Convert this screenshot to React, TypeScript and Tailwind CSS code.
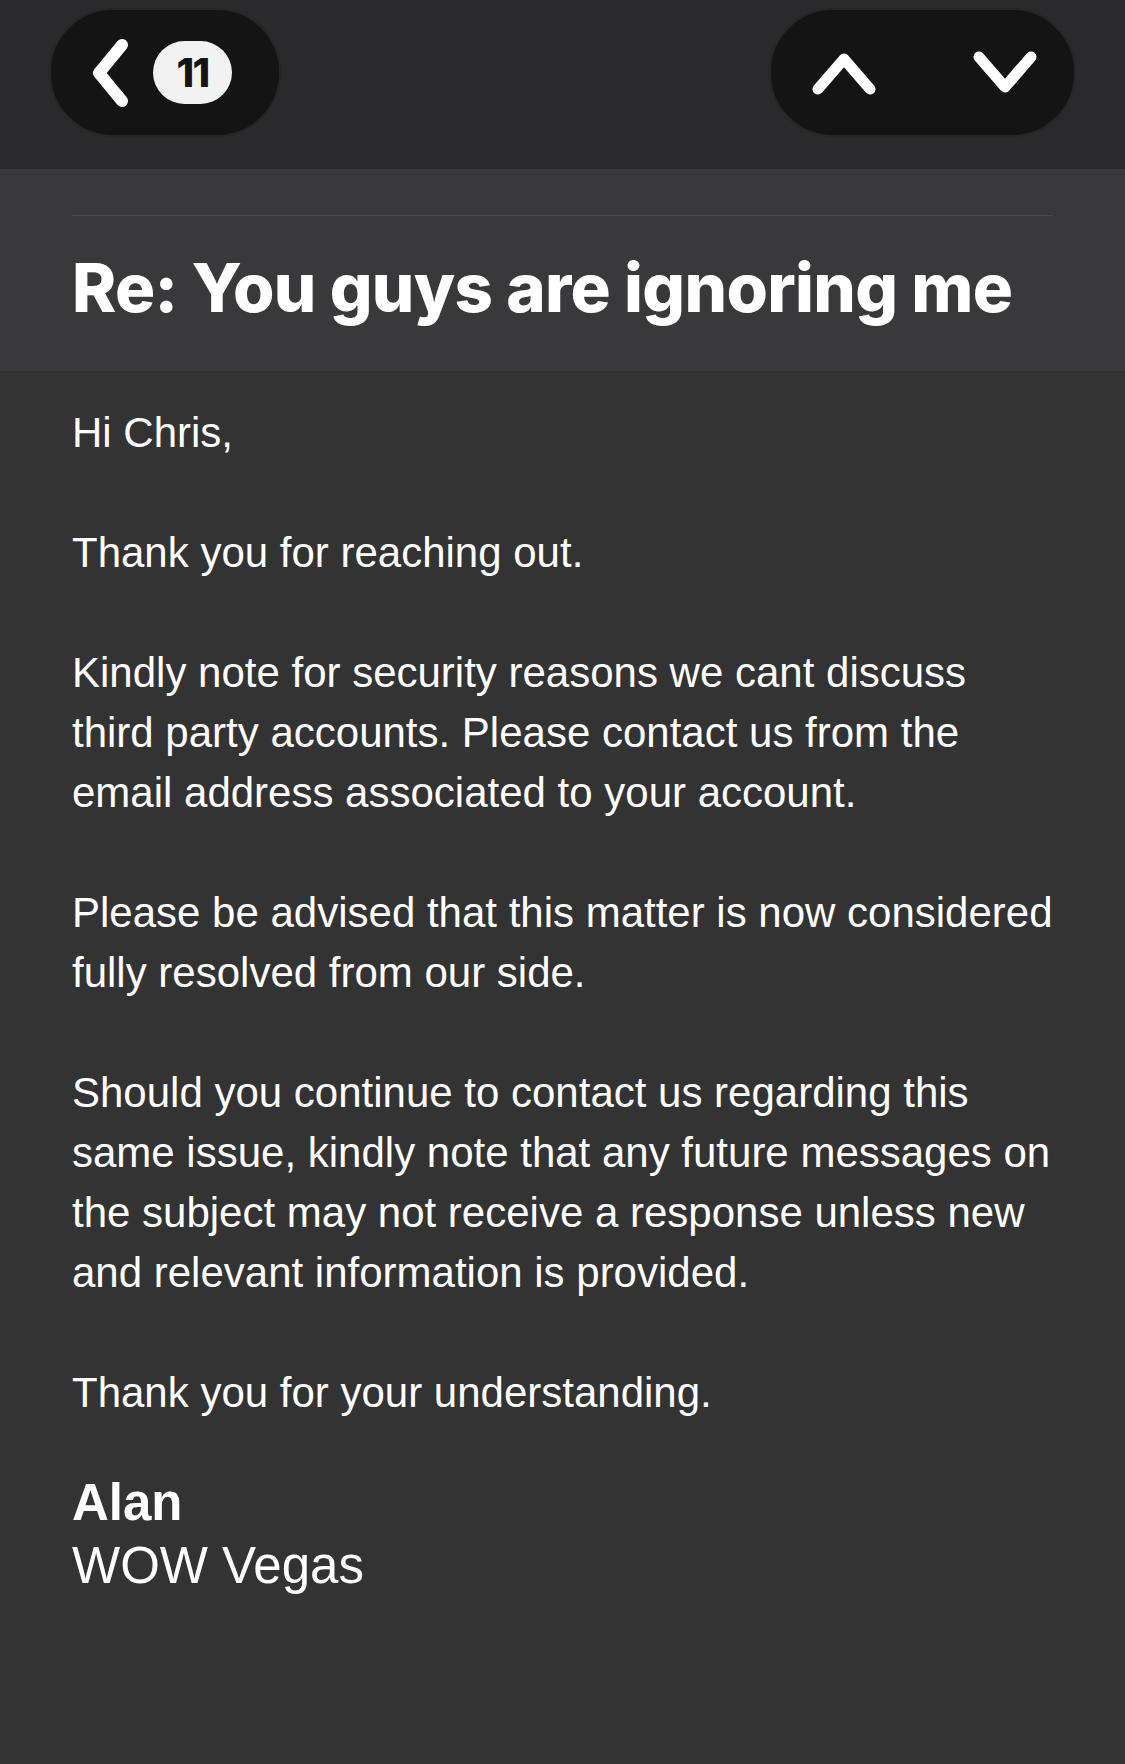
import React from "react";

function ChevronLeft() {
  return (
    <svg width="44" height="70" viewBox="0 0 44 70" fill="none">
      <path d="M33 7 L10 35 L33 63" stroke="white" strokeWidth="12" strokeLinecap="round" strokeLinejoin="round" />
    </svg>
  );
}

function ChevronUp() {
  return (
    <svg width="66" height="48" viewBox="0 0 66 48" fill="none">
      <path d="M7 40 L33 10 L59 40" stroke="white" strokeWidth="11" strokeLinecap="round" strokeLinejoin="round" />
    </svg>
  );
}

function ChevronDown() {
  return (
    <svg width="66" height="48" viewBox="0 0 66 48" fill="none">
      <path d="M7 8 L33 38 L59 8" stroke="white" strokeWidth="11" strokeLinecap="round" strokeLinejoin="round" />
    </svg>
  );
}

const paragraphs: string[][] = [
  ["Hi Chris,"],
  ["Thank you for reaching out."],
  [
    "Kindly note for security reasons we cant discuss",
    "third party accounts. Please contact us from the",
    "email address associated to your account.",
  ],
  [
    "Please be advised that this matter is now considered",
    "fully resolved from our side.",
  ],
  [
    "Should you continue to contact us regarding this",
    "same issue, kindly note that any future messages on",
    "the subject may not receive a response unless new",
    "and relevant information is provided.",
  ],
  ["Thank you for your understanding."],
];

export default function App() {
  return (
    <div className="min-h-[1764px] w-[1125px] bg-[#333333] text-white">
      {/* Top bar */}
      <header className="flex h-[169px] items-start justify-between bg-[#2a2a2c] px-[49px] pt-[8px]">
        <div className="flex h-[129px] w-[232px] items-center gap-[20px] rounded-[64px] border-2 border-[#262628] bg-[#141414] pl-[38px]">
          <ChevronLeft />
          <div className="flex h-[63px] w-[79px] items-center justify-center rounded-full bg-[#f2f2f2] font-['Inter',sans-serif] text-[40px] font-extrabold tracking-[-0.04em] text-[#141414]">
            11
          </div>
        </div>
        <div className="flex h-[129px] w-[307px] items-center justify-between rounded-[64px] border-2 border-[#262628] bg-[#141414] pl-[40px] pr-[36px]">
          <ChevronUp />
          <ChevronDown />
        </div>
      </header>

      {/* Subject */}
      <section className="h-[202px] bg-[#39393b] px-[72px] pt-[46px]">
        <div className="h-px w-full bg-[#4a4a4c]" />
        <h1 className="mt-[32px] font-['Inter',sans-serif] text-[67px] font-extrabold leading-[80px] tracking-[-0.01em] text-white">
          Re: You guys are ignoring me
        </h1>
      </section>

      {/* Body */}
      <main className="px-[72px] pt-[32px] font-['Liberation_Sans',Arial,sans-serif] text-[42px] leading-[60px] text-white">
        <div className="flex flex-col gap-[60px]">
          {paragraphs.map((p, i) => (
            <p key={i}>
              {p.map((line, j) => (
                <span key={j} className="block">
                  {line}
                </span>
              ))}
            </p>
          ))}
        </div>
        <div className="mt-[48px]">
          <p className="text-[51px] font-bold leading-[63px]">Alan</p>
          <p className="text-[51px] leading-[63px]">WOW Vegas</p>
        </div>
      </main>
    </div>
  );
}
